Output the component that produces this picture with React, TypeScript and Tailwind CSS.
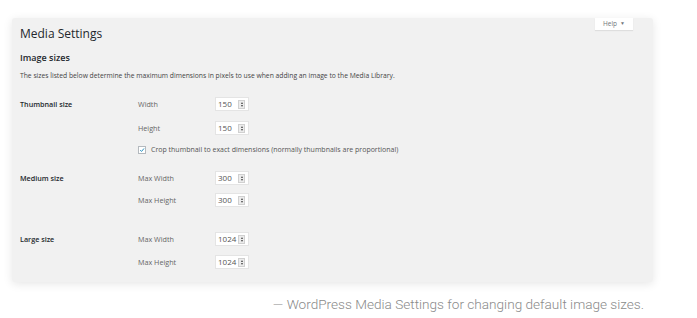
import React from "react";

const SANS = "font-['Open_Sans','Noto_Sans',sans-serif]";

function NumberInput({ value }: { value: string }) {
  return (
    <div className="flex h-[14px] w-[34px] items-center justify-between border border-[#e4e4e4] bg-white pl-[2px] pr-[3px]">
      <span className="text-[8px] leading-none text-[#555]">{value}</span>
      <span className="flex h-[9px] w-[7px] flex-col items-center justify-center gap-[1px] border border-[#d0d0d0] bg-[#ececec]">
        <span className="h-0 w-0 border-x-[1.5px] border-b-[2px] border-x-transparent border-b-[#444]" />
        <span className="h-0 w-0 border-x-[1.5px] border-t-[2px] border-x-transparent border-t-[#444]" />
      </span>
    </div>
  );
}

function Row({
  label,
  field,
  value,
  className = "",
}: {
  label?: string;
  field: string;
  value: string;
  className?: string;
}) {
  return (
    <div className={`flex h-[16px] items-center ${className}`}>
      <div className="w-[118px] text-[7.2px] font-semibold text-[#23282d]">{label}</div>
      <div className="w-[77px] text-[7.2px] text-[#666]">{field}</div>
      <NumberInput value={value} />
    </div>
  );
}

export default function App() {
  return (
    <div className={`relative h-[318px] w-[697px] overflow-hidden bg-white ${SANS}`}>
      <div className="ml-[12px] mt-[18px] w-[641px] rounded-[3px] bg-[#f1f1f1] pb-[12px] pl-[8px] pt-[8px] shadow-[0_2px_10px_rgba(0,0,0,0.10)]">
        <div className="relative">
          <div className="absolute right-[20px] top-[-8px] flex h-[12px] w-[38px] items-center justify-center gap-[3px] bg-white shadow-[0_1px_1px_rgba(0,0,0,0.08)]">
            <span className="text-[6.5px] text-[#72777c]">Help</span>
            <span className="text-[5px] text-[#72777c]">▼</span>
          </div>
        </div>
        <h1 className="h-[16px] text-[12px] leading-[16px] text-[#23282d]">Media Settings</h1>
        <h2 className="mt-[10px] h-[12px] text-[9px] font-semibold leading-[12px] text-[#23282d]">
          Image sizes
        </h2>
        <p className="mt-[7px] h-[10px] text-[6.75px] leading-[10px] text-[#444]">
          The sizes listed below determine the maximum dimensions in pixels to use when adding an image to the Media Library.
        </p>

        <Row className="mt-[15px]" label="Thumbnail size" field="Width" value="150" />
        <Row className="mt-[8px]" field="Height" value="150" />
        <div className="mt-[6px] flex h-[16px] items-center">
          <div className="w-[118px]" />
          <span className="mr-[5px] flex h-[8px] w-[8px] items-center justify-center border border-[#b4b9be] bg-white">
            <svg viewBox="0 0 10 10" className="h-[8px] w-[8px]">
              <path d="M2 5.2 L4.2 7.4 L8.4 2.4" fill="none" stroke="#1e8cbe" strokeWidth="1.6" />
            </svg>
          </span>
          <span className="text-[7px] text-[#555]">
            Crop thumbnail to exact dimensions (normally thumbnails are proportional)
          </span>
        </div>

        <Row className="mt-[12px]" label="Medium size" field="Max Width" value="300" />
        <Row className="mt-[6px]" field="Max Height" value="300" />

        <Row className="mt-[23px]" label="Large size" field="Max Width" value="1024" />
        <Row className="mt-[7px]" field="Max Height" value="1024" />
      </div>

      <p className="mt-[14px] w-[644px] text-right font-['Roboto',sans-serif] text-[13.6px] font-light leading-[16px] text-[#8a8a8a]">
        — WordPress Media Settings for changing default image sizes.
      </p>
    </div>
  );
}
